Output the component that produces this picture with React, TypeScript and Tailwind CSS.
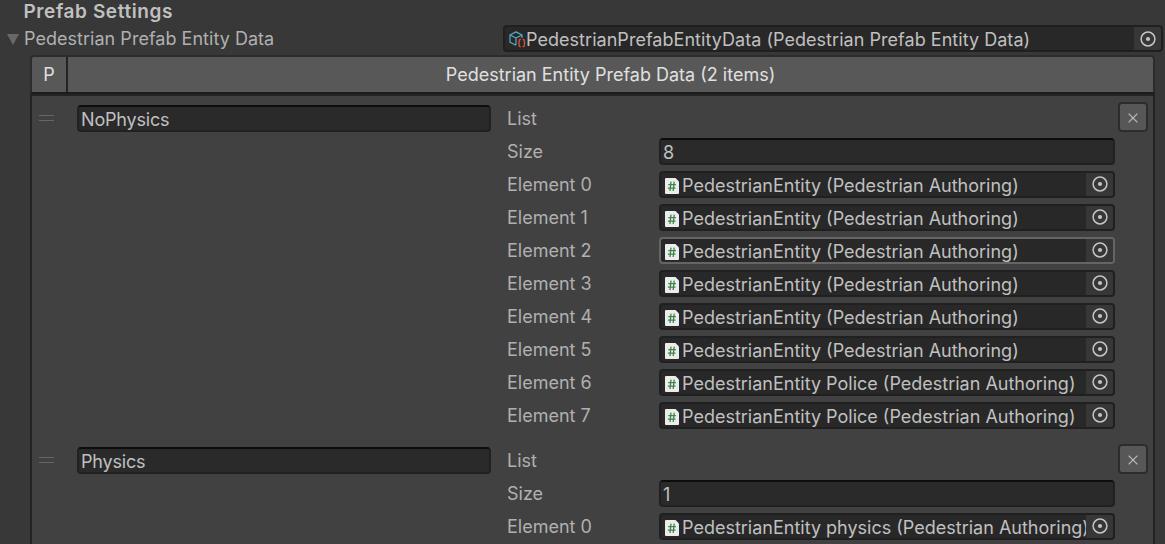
import type { ReactNode } from 'react'
import { clsx } from 'clsx'

type Group = {
    name: string
    items: string[]
}

const groups: Group[] = [
    {
        name: 'NoPhysics',
        items: [
            'PedestrianEntity (Pedestrian Authoring)',
            'PedestrianEntity (Pedestrian Authoring)',
            'PedestrianEntity (Pedestrian Authoring)',
            'PedestrianEntity (Pedestrian Authoring)',
            'PedestrianEntity (Pedestrian Authoring)',
            'PedestrianEntity (Pedestrian Authoring)',
            'PedestrianEntity Police (Pedestrian Authoring)',
            'PedestrianEntity Police (Pedestrian Authoring)',
        ],
    },
    { name: 'Physics', items: ['PedestrianEntity physics (Pedestrian Authoring)'] },
]

function ScriptIcon() {
    return (
        <svg width="14" height="16" viewBox="0 0 14 16" className="shrink-0">
            <path d="M1 0h9.5L14 3.5V15a1 1 0 0 1-1 1H1a1 1 0 0 1-1-1V1a1 1 0 0 1 1-1z" fill="#ececec" />
            <path d="M6 3.6 5 13M9.2 3.6 8.2 13M3.3 6.7h7.6M2.9 10.1h7.6" stroke="#3d8549" strokeWidth="1.3" fill="none" />
        </svg>
    )
}

function PrefabDataIcon() {
    return (
        <svg width="17" height="17" viewBox="0 0 17 17" fill="none" className="shrink-0">
            <path d="M7 14.2 1 11.3V4L7 .9 13 4v3M1 4l6 3 6-3M7 7v7" stroke="#59a9cb" strokeWidth="1.2" strokeLinejoin="round" />
            <path d="M11.8 8.5h-.7q-.9 0-.9.9v1.7q0 .9-1 .9 1 0 1 .9v1.8q0 .9.9.9h.7M13.7 8.5h.7q.9 0 .9.9v1.7q0 .9 1 .9-1 0-1 .9v1.8q0 .9-.9.9h-.7" stroke="#d9532f" strokeWidth="1.3" />
        </svg>
    )
}

function PickerIcon() {
    return (
        <svg width="16" height="16" viewBox="0 0 16 16" fill="none">
            <circle cx="8" cy="8" r="6.9" stroke="#c4c4c4" strokeWidth="1.5" />
            <circle cx="8" cy="8" r="2.1" fill="#c4c4c4" />
        </svg>
    )
}

type ObjectFieldProps = {
    icon: ReactNode
    value: string
    active?: boolean
    className?: string
    pickerClassName?: string
}

function ObjectField({ icon, value, active, className, pickerClassName }: ObjectFieldProps) {
    return (
        <div
            className={clsx(
                'flex h-[27px] overflow-hidden rounded-[4px] border-2 bg-[#282828]',
                active ? 'border-[#656565]' : 'border-[#202020]',
                className
            )}
        >
            <div className="flex min-w-0 flex-1 items-center overflow-hidden whitespace-nowrap">
                {icon}
                <span className="relative top-px">{value}</span>
            </div>
            <div className={clsx('flex w-[27px] shrink-0 items-center justify-center bg-[#373737]', pickerClassName)}>
                <PickerIcon />
            </div>
        </div>
    )
}

function TextField({ value, className }: { value: string; className?: string }) {
    return (
        <div
            className={clsx(
                'flex h-[27px] items-center rounded-[4px] border-2 border-[#212121] border-t-[#0d0d0d] bg-[#2a2a2a] pl-0.5',
                className
            )}
        >
            <span className="relative top-px tracking-[-0.01em]">{value}</span>
        </div>
    )
}

function Row({ label, children }: { label: string; children?: ReactNode }) {
    return (
        <div className="flex h-[27px] items-center">
            <span className="w-[152px] shrink-0 pt-px text-[#b0b0b0]">{label}</span>
            {children}
        </div>
    )
}

function GroupItem({ group, activeIndex }: { group: Group; activeIndex?: number }) {
    return (
        <div className="flex items-start">
            <div className="mt-[10px] ml-[7px] flex w-[15px] flex-col gap-1">
                <div className="h-px bg-[#666666]" />
                <div className="h-px bg-[#666666]" />
            </div>
            <TextField value={group.name} className="ml-[23px] w-[414px]" />
            <div className="ml-4 flex w-[608px] flex-col gap-[6px]">
                <Row label="List" />
                <Row label="Size">
                    <TextField value={String(group.items.length)} className="flex-1" />
                </Row>
                {group.items.map((item, i) => (
                    <Row key={i} label={`Element ${i}`}>
                        <ObjectField
                            icon={<span className="mr-[3px] ml-1 pt-[3px]"><ScriptIcon /></span>}
                            value={item}
                            active={i === activeIndex}
                            className="min-w-0 flex-1"
                            pickerClassName="pb-0.5"
                        />
                    </Row>
                ))}
            </div>
            <button className="-mt-[3px] ml-[3px] flex h-[30px] w-[30px] items-center justify-center rounded-[4px] border-2 border-[#2c2c2c] bg-[#575757] pt-px">
                <svg width="10" height="10" viewBox="0 0 10 10">
                    <path d="M.6.6l8.8 8.8M9.4.6.6 9.4" stroke="#bdbdbd" strokeWidth="1.2" />
                </svg>
            </button>
        </div>
    )
}

export default function App() {
    return (
        <div className="h-[544px] w-[1165px] overflow-hidden bg-[#383838] font-['Inter',sans-serif] text-[18px] leading-[22px] text-[#c0c0c0]">
            <div className="flex h-[25px] items-start pt-px pl-[23.5px] text-[19px] font-semibold tracking-[0.6px]">Prefab Settings</div>

            <div className="flex h-[30px] items-start">
                <svg width="12" height="11" viewBox="0 0 12 11" className="mt-[9px] ml-[6.5px] shrink-0">
                    <path d="M0 0h12L6 11z" fill="#686868" />
                </svg>
                <span className="mt-[3px] ml-[5.5px] w-[479px] tracking-[0.03px] text-[#b0b0b0]">Pedestrian Prefab Entity Data</span>
                <ObjectField
                    icon={<span className="ml-1 pt-0.5"><PrefabDataIcon /></span>}
                    value="PedestrianPrefabEntityData (Pedestrian Prefab Entity Data)"
                    className="w-[660px] tracking-[0.04px]"
                />
            </div>

            <div className="ml-[30px] w-[1125px]">
                <div className="flex h-[39px] overflow-hidden rounded-t-[4px] border-2 border-[#2c2c2c] border-b-[#1c1c1c] bg-[#585858] text-[#e0e0e0]">
                    <div className="flex w-9 items-center justify-center border-r-2 border-[#232323]">P</div>
                    <div className="flex flex-1 items-center justify-center">Pedestrian Entity Prefab Data (2 items)</div>
                </div>
                <div className="flex h-[460px] flex-col gap-[18px] border-2 border-[#232323] bg-[#414141] pt-[9px]">
                    {groups.map((g, i) => (
                        <GroupItem key={g.name} group={g} activeIndex={i === 0 ? 2 : undefined} />
                    ))}
                </div>
            </div>
        </div>
    )
}
